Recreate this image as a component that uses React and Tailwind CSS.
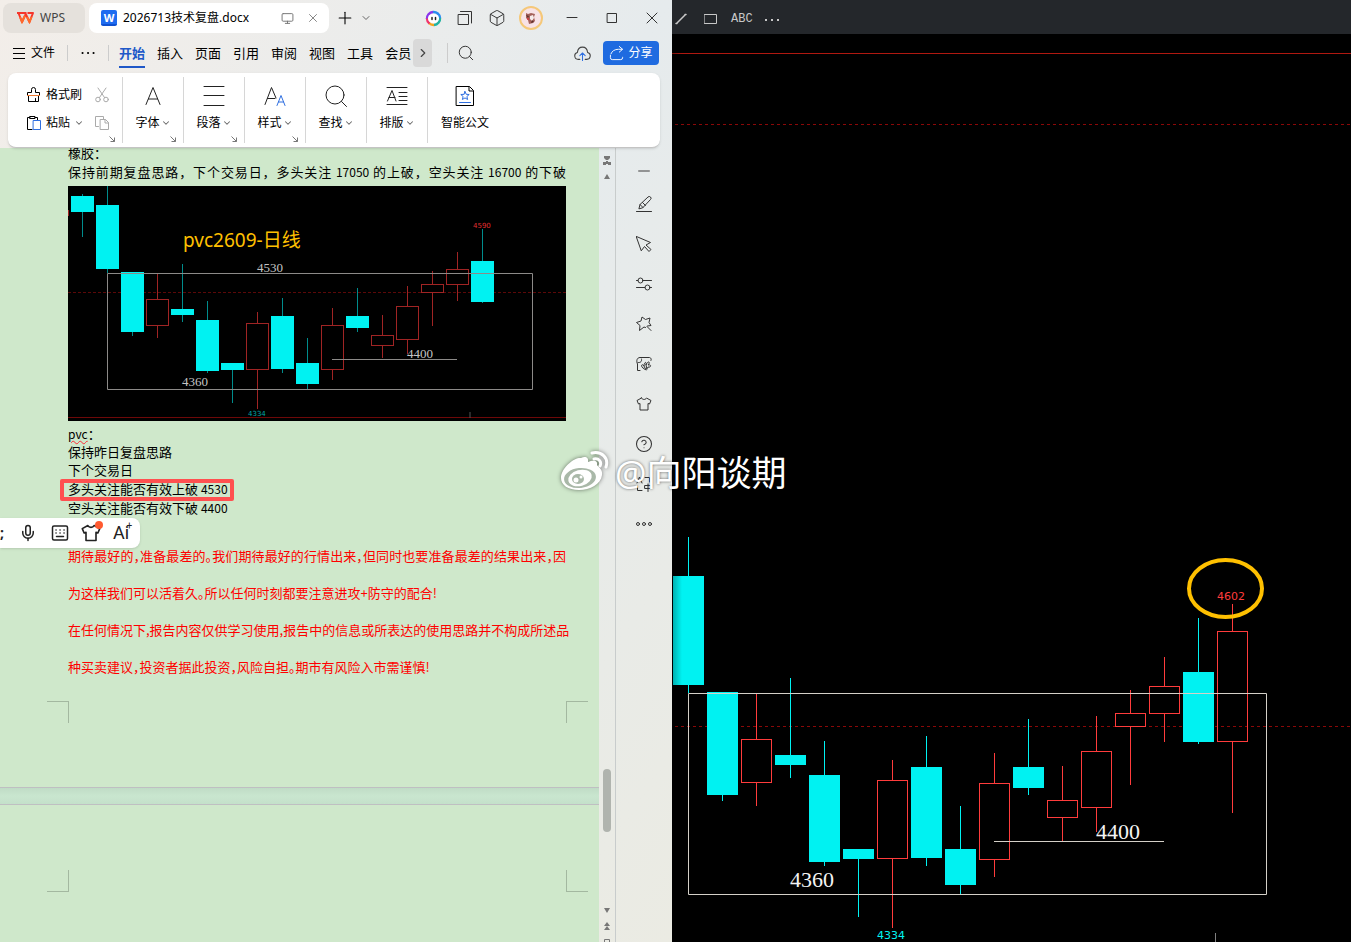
import React from 'react';
import {
  Box, ChevronDown, ChevronRight, CircleHelp, Mic, Minus, Monitor, Plus, Search, X,
} from 'lucide-react';

// [body left, body top, body bottom, wick high, wick low, rising]
const bigCandles = [
  [673, 576, 685, 537, 693, false],
  [707, 692, 795, 692, 801, false],
  [741, 739, 783, 694, 806, true],
  [775, 755, 765, 678, 778, false],
  [809, 775, 862, 741, 866, false],
  [843, 849, 859, 849, 917, false],
  [877, 780, 859, 760, 928, true],
  [911, 767, 858, 736, 866, false],
  [945, 849, 885, 806, 894, false],
  [979, 783, 860, 753, 877, true],
  [1013, 767, 788, 719, 795, false],
  [1047, 800, 818, 766, 841, true],
  [1081, 751, 808, 716, 832, true],
  [1115, 713, 727, 690, 785, true],
  [1149, 686, 714, 657, 742, true],
  [1183, 672, 742, 618, 744, false],
  [1217, 631, 742, 604, 813, true],
];

const smallCandles = [
  [71, 196, 212, 194, 237, false],
  [96, 205, 269, 186, 273, false],
  [121, 272, 332, 272, 336, false],
  [146, 299, 326, 273, 338, true],
  [171, 309, 315, 264, 322, false],
  [196, 320, 371, 301, 373, false],
  [221, 363, 370, 363, 403, false],
  [246, 323, 370, 312, 409, true],
  [271, 316, 369, 298, 373, false],
  [296, 363, 384, 338, 390, false],
  [321, 325, 370, 308, 380, true],
  [346, 316, 328, 288, 332, false],
  [371, 335, 346, 315, 358, true],
  [396, 306, 340, 286, 354, true],
  [421, 284, 293, 271, 326, true],
  [446, 269, 285, 252, 301, true],
  [471, 261, 302, 229, 303, false],
];

function Candles({ data, width, up, down, wickDown }) {
  const mid = (width - 1) / 2;
  return (
    <g shapeRendering="crispEdges">
      {data.map(([x, top, bottom, high, low, rising]) => (
        <g key={x}>
          <rect x={x + mid} y={high} width="1" height={top - high} fill={rising ? up : wickDown} />
          <rect x={x + mid} y={bottom} width="1" height={low - bottom} fill={rising ? up : wickDown} />
          {rising
            ? <rect x={x + 0.5} y={top + 0.5} width={width - 1} height={bottom - top - 1} fill="none" stroke={up} />
            : <rect x={x} y={top} width={width} height={bottom - top} fill={down} />}
        </g>
      ))}
    </g>
  );
}

function DailyChart() {
  return (
    <svg className="block w-full" viewBox="68 186 498 235" role="img" aria-label="pvc2609 日线">
      <rect x="68" y="186" width="498" height="235" fill="#000" />
      <path d="M68 292.5H566" stroke="#5c0808" strokeDasharray="3 2" />
      <path d="M68 417.5H566" stroke="#6e0808" />
      <path d="M470 412v6" stroke="#555" />
      <path d="M68.5 210v6" stroke="#a02020" />
      <Candles data={smallCandles} width={23} up="#a02424" down="#00f2f2" wickDown="#008c8c" />
      <path d="M107.500 273.500H532.500V389.500H107.500Z" fill="none" stroke="#8c8a88" />
      <path d="M332 359.500H457" stroke="#8c8a88" />
      <g className="font-['Liberation_Serif',serif] text-[13px]" fill="#c4c4c4">
        <text x="257" y="272">4530</text>
        <text x="182" y="386">4360</text>
        <text x="407" y="358">4400</text>
      </g>
      <g className="font-['DejaVu_Sans',sans-serif] text-[7px]">
        <text x="473" y="228" fill="#e03030">4590</text>
        <text x="248" y="416" fill="#00a8a8">4334</text>
      </g>
      <text x="183" y="247" fill="#ffc000" className="font-['Noto_Sans','Noto_Sans_CJK_SC',sans-serif] text-[19px]">pvc2609-日线</text>
    </svg>
  );
}

function TradingChart() {
  return (
    <svg className="min-h-0 w-full flex-1" viewBox="672 34 679 908" preserveAspectRatio="xMinYMin meet" role="img" aria-label="行情走势">
      <defs>
        <linearGradient id="edge">
          <stop offset="0" stopColor="#000" stopOpacity="0.3" />
          <stop offset="1" stopColor="#000" stopOpacity="0" />
        </linearGradient>
      </defs>
      <path d="M672 53.500H1351" stroke="#b01810" />
      <path d="M675 124.500H1351M675 726.500H1351" stroke="#8b0808" strokeDasharray="3 3" />
      <Candles data={bigCandles} width={31} up="#ff3c3c" down="#00f2f2" wickDown="#00f2f2" />
      <rect x="672" y="34" width="10" height="908" fill="url(#edge)" />
      <path d="M688.500 693.500H1266.500V894.500H688.500ZM994 841.500H1164" fill="none" stroke="#d4d0c8" />
      <path d="M1215.500 933v9" stroke="#808080" />
      <g className="font-['Liberation_Serif',serif] text-[22px]" fill="#f4f4f4">
        <text x="790" y="887">4360</text>
        <text x="1096" y="839">4400</text>
      </g>
      <g className="font-['DejaVu_Sans',sans-serif] text-[11px]">
        <text x="1217" y="600" fill="#ff3c3c">4602</text>
        <text x="877" y="939" fill="#00f2f2">4334</text>
      </g>
      <ellipse cx="1225.500" cy="588.500" rx="36.500" ry="28.500" fill="none" stroke="#ffc000" strokeWidth="4" />
    </svg>
  );
}

/* ---------- icons ---------- */

function Icon({ size = 16, box = 16, children, className = '' }) {
  return (
    <svg width={size} height={size} viewBox={`0 0 ${box} ${box}`} fill="none" stroke="currentColor" strokeLinecap="round" strokeLinejoin="round" className={className} aria-hidden="true">
      {children}
    </svg>
  );
}

const WpsLogo = () => (
  <svg width="17" height="12" viewBox="0 0 17 12" fill="none" stroke="#f5352b" strokeWidth="2" aria-hidden="true">
    <path d="M0 1h9.500M10.500 1H16l-3.500 9L8.500 1.500M1.500 1l3.500 9 4-8.500" strokeLinejoin="round" />
    <path d="M3 5l2 5 3-6.500M10 5l2.500 5 2-5" stroke="#ff6a2a" />
  </svg>
);

const WordLogo = () => (
  <span className="flex size-4 items-center justify-center rounded-xs border-b-2 border-[#0f50d0] bg-[#1f6cf0] text-[11px] font-bold leading-none text-white">W</span>
);

const AiRing = () => (
  <svg width="17" height="17" viewBox="0 0 17 17" fill="none" strokeWidth="2.500" aria-hidden="true">
    <path d="M2 9a6.500 6.500 0 0 1 6-7" stroke="#8a35ec" />
    <path d="M8 2a6.500 6.500 0 0 1 7 6" stroke="#2c8cf0" />
    <path d="M15 8a6.500 6.500 0 0 1-6 7" stroke="#22b3a0" />
    <path d="M9 15a6.500 6.500 0 0 1-5-2" stroke="#f6a21c" />
    <path d="M4.500 13.500A6.500 6.500 0 0 1 2 8.500" stroke="#f0366c" />
    <ellipse cx="8.500" cy="8.500" rx="5.500" ry="4.500" fill="#fff" />
    <path d="M7 7.500v2M10.500 7.500v2" stroke="#222" strokeWidth="1.500" strokeLinecap="round" />
  </svg>
);

const Avatar = () => (
  <svg width="24" height="24" viewBox="0 0 24 24" aria-hidden="true">
    <circle cx="12" cy="12" r="11" fill="#f8e2e6" stroke="#f5c879" strokeWidth="2" />
    <path d="M7 7l2 1 3-1 4 1-1 3 1 4-2 2-4 1-1-4-2-2z" fill="#a4605a" />
    <path d="M11 10l3-1 1 3-2 3-2-2z" fill="#f6ecec" />
    <path d="M7 9l3 1-1 2zM13 14l2 2-3 1z" fill="#5c2c2a" />
    <circle cx="9" cy="13" r="1" fill="#d8343c" />
  </svg>
);

const Stack = () => (
  <Icon><path d="M1.500 4.500h10v10h-10zM3.500 1.500h11V13" /></Icon>
);

const CloudIcon = () => (
  <Icon size={17}>
    <path d="M5.500 13.500H4a3.300 3.300 0 0 1-.8-6.500C3.500 4 5.500 2 8 2s4.500 2 4.800 5a3.300 3.300 0 0 1-.8 6.500h-1.500" />
    <path d="M8 14.500V8M5.500 10L8 7.500l2.500 2.500" stroke="#2f6fe0" />
  </Icon>
);

const Brush = () => (
  <Icon>
    <path d="M1.500 8V5.500h4v-3a1.500 1.500 0 0 1 4 0v3h4V8M2.500 8.500v6h10v-6M9.500 14.500v-3" />
    <path d="M1.500 8.500h12" stroke="#f07a30" />
  </Icon>
);

const Cut = () => (
  <Icon>
    <path d="M4 1l6.500 9.500M12 1L5.500 10.500" />
    <circle cx="4" cy="12.500" r="2.300" />
    <circle cx="12" cy="12.500" r="2.300" />
  </Icon>
);

const Paste = () => (
  <Icon>
    <path d="M6 14.500H1.500v-12H4M9 2.500h2.500V5M4 1.500h5v2H4z" />
    <path d="M7.500 5.500h7v9h-7z" stroke="#2f6fe0" />
  </Icon>
);

const CopyDocs = () => (
  <Icon><path d="M4.500 11.500h-3v-10h8v3M6.500 4.500h5l3 3v7h-8zM11 4.500V8h3.500" /></Icon>
);

const Launcher = () => (
  <svg width="6" height="6" viewBox="0 0 6 6" fill="none" stroke="#777" className="absolute bottom-px right-[7px]" aria-hidden="true">
    <path d="M.5.5l5 5M5.500 1.500v4H1.500" />
  </svg>
);

const FontIcon = () => (
  <Icon size={24} box={24}><path d="M5 20.500l7-17 7 17M7.500 15h9" /></Icon>
);

const ParagraphIcon = () => (
  <Icon size={24} box={24}><path d="M2 2.500h20M2 11.500h20M2 21.500h20" /></Icon>
);

const StyleIcon = () => (
  <Icon size={24} box={24}>
    <path d="M2 20.500l6.500-17L13 14M4.500 14.500H12" />
    <path d="M14 21.500l4-10 4 10M15.500 18h5" stroke="#2f6fe0" />
  </Icon>
);

const FindIcon = () => (
  <Icon size={24} box={24}><circle cx="11" cy="11" r="9" /><path d="M17.500 17.500l5 5" /></Icon>
);

const TypesetIcon = () => (
  <Icon size={24} box={24}><path d="M2 3.500h20M14 8.500h8M14 12.500h8M14 16.500h8M2 20.500h20M2.500 17L7 6.500 11 17M4 13.500h6" /></Icon>
);

const SmartDocIcon = () => (
  <Icon size={24} box={24}>
    <path d="M3.500 2.500h13l4 4v15h-17zM16 3v4h4" />
    <path d="M12 7.500l1.200 2.800 3 .2-2.300 2 .7 3-2.600-1.600-2.600 1.600.7-3-2.300-2 3-.2zM6.500 18.500h11" stroke="#2f6fe0" />
  </Icon>
);

const TeeIcon = ({ size = 16, weight = 1 }) => (
  <Icon size={size}>
    <path strokeWidth={weight} d="M5.500 2L1 4.500 2.500 8 4 7.500V14h8V7.500l1.500.5L15 4.500 10.500 2C9.500 4 6.500 4 5.500 2z" />
  </Icon>
);

const sideTools = [
  ['画笔', <Icon><path d="M.5 15.500h15M3 12.500l1-4L12 1a1.500 1.500 0 0 1 2.500 2.500L7 11.500zM4 8.500l3 3M6.500 6.500l3 3" /></Icon>],
  ['选择', <Icon><path d="M.5.5l14 6-4.500 2.500 5 4.500-2 2-4.500-5-3 4z" /></Icon>],
  ['属性', <Icon><path d="M.5 4.500H2M7 4.500h8.500M.5 11.500H9M14 11.500h1.500" /><circle cx="4.500" cy="4.500" r="2.500" /><circle cx="11.500" cy="11.500" r="2.500" /></Icon>],
  ['特色', <Icon><path d="M9.500 11.500L8 11l-4.500 3.500.5-5L.5 6.500 5 5l1-4 3.500 2.500L14 2l-1 4.500 2 3-3.500.5M11 10.500l4 4" /></Icon>],
  ['图文', <Icon><path d="M4 14.500H1.500V8C0 5 1 1.500 4 1.500h9.500a2 2 0 0 1 1.500 3M2 6.500C5 7 6 5 5.500 3M7 12c-3-2-1-5 1-2 0-4 3-5 2-1 2-5 5-3 2 0 4-1 3 3 0 2-1 3-4 3-5 1zM8 10l2 4M10 9l1 4" /></Icon>],
  ['皮肤', <TeeIcon />],
  ['帮助', <CircleHelp size={18} strokeWidth={1.4} />],
  ['翻译', <Icon><path d="M1 7l2.500-6L6 7M2 5h3M9 1.500h4.500V6M1.500 10v4.500H6M9 9.500h6v3H9zM12 8v7.500" /></Icon>],
  ['更多', <Icon><circle cx="2" cy="8" r="1.500" /><circle cx="8" cy="8" r="1.500" /><circle cx="14" cy="8" r="1.500" /></Icon>],
];

/* ---------- window chrome ---------- */

function TitleBar() {
  return (
    <header className="flex h-9 shrink-0 items-center pl-[3px] text-xs">
      <button className="flex h-[30px] w-[82px] shrink-0 items-center gap-[6px] rounded-lg bg-[#e5e1dc] pl-[14px] text-[#444]">
        <WpsLogo />WPS
      </button>
      <div className="ml-1 flex h-[30px] w-60 shrink-0 items-center rounded-lg bg-white pl-3 pr-[9px]">
        <WordLogo />
        <span className="ml-[6px] whitespace-nowrap text-black">2026713技术复盘.docx</span>
        <Monitor size={13} strokeWidth={1.8} className="ml-auto text-[#777]" />
        <button aria-label="关闭标签" className="ml-[12px]"><X size={14} strokeWidth={1.5} className="text-[#777]" /></button>
      </div>
      <button aria-label="新建" className="ml-[6px] shrink-0"><Plus size={20} strokeWidth={1.3} /></button>
      <button aria-label="标签列表" className="ml-[5px] shrink-0"><ChevronDown size={12} strokeWidth={2} className="text-[#666]" /></button>
      <div className="ml-auto flex shrink-0 items-center text-[#333]">
        <button aria-label="AI" className="flex w-8 justify-center"><AiRing /></button>
        <button aria-label="窗口" className="flex w-8 justify-center"><Stack /></button>
        <button aria-label="应用" className="flex w-8 justify-center"><Box size={18} strokeWidth={1.3} /></button>
        <button aria-label="账号" className="ml-[2px] mr-[5px] flex w-8 justify-center"><Avatar /></button>
        <button aria-label="最小化" className="flex w-10 justify-center"><Icon size={12} box={12}><path d="M1 5.500h10" /></Icon></button>
        <button aria-label="最大化" className="flex w-10 justify-center"><Icon size={12} box={12}><path d="M1.500 1.500h9v9h-9z" /></Icon></button>
        <button aria-label="关闭" className="flex w-10 justify-center"><Icon size={12} box={12}><path d="M1 1l10 10M11 1L1 11" /></Icon></button>
      </div>
    </header>
  );
}

const menus = ['插入', '页面', '引用', '审阅', '视图', '工具', '会员'];

function MenuBar() {
  return (
    <nav className="flex h-[34px] shrink-0 items-center pl-[13px] text-[13px] text-black">
      <button className="flex shrink-0 items-center gap-[6px] text-xs">
        <Icon size={12} box={12}><path d="M0 1.500h12M0 6.500h12M0 11.500h12" /></Icon>文件
      </button>
      <span className="ml-3 h-4 w-px bg-[#ccc]" />
      <button aria-label="更多菜单" className="ml-[13px]">
        <Icon size={14} box={14}><path d="M1.500 7h.1M7 7h.1M12.500 7h.1" strokeWidth="2" /></Icon>
      </button>
      <span className="ml-[13px] h-4 w-px bg-[#ccc]" />
      <div className="ml-[10px] flex h-full shrink-0 items-center gap-3 pt-px">
        <button className="flex h-7 items-center border-b-2 border-[#2058c8] pt-[2px] font-bold text-[#2058c8]">开始</button>
        {menus.map(m => <button key={m}>{m}</button>)}
      </div>
      <button aria-label="向右滚动" className="ml-[2px] flex h-7 w-[19px] shrink-0 items-center justify-center rounded-sm bg-[#d9d9d9]">
        <ChevronRight size={14} strokeWidth={2} className="text-[#444]" />
      </button>
      <span className="ml-[15px] h-5 w-px bg-[#ccc]" />
      <button aria-label="搜索" className="ml-[9px]"><Search size={18} strokeWidth={1.3} className="text-[#333]" /></button>
      <button aria-label="云同步" className="ml-auto text-[#444]"><CloudIcon /></button>
      <button className="ml-3 mr-[13px] flex h-6 w-14 shrink-0 items-center justify-center gap-1 rounded-sm bg-[#1f6be0] text-xs text-white">
        <Icon size={15}><path d="M1.500 10v2.500a2 2 0 0 0 2 2h9a2 2 0 0 0 2-2V12M2 8.500c1-3 4-5 8-5h4M11 .5l3.500 3-3.500 3" /></Icon>分享
      </button>
    </nav>
  );
}

const ribbonGroups = [
  { label: '字体', icon: <FontIcon />, launcher: true },
  { label: '段落', icon: <ParagraphIcon />, launcher: true },
  { label: '样式', icon: <StyleIcon />, launcher: true },
  { label: '查找', icon: <FindIcon />, launcher: false },
  { label: '排版', icon: <TypesetIcon />, launcher: false },
];

const Caret = () => <ChevronDown size={10} strokeWidth={2.5} className="text-[#666]" />;

function Ribbon() {
  return (
    <div className="relative z-10 ml-2 mr-3 mt-[3px] flex h-[75px] shrink-0 items-center rounded-lg border-b border-[#c4c4c4] bg-white text-xs text-black shadow">
      <div className="relative flex h-[66px] w-[115px] shrink-0 flex-col gap-[10px] border-r border-[#d6d6d6] pl-[18px] pr-3 pt-[9px]">
        <div className="flex h-[18px] items-center">
          <button className="flex items-center gap-1"><Brush />格式刷</button>
          <button aria-label="剪切" className="ml-auto text-[#aaa]"><Cut /></button>
        </div>
        <div className="flex h-[18px] items-center">
          <button className="flex items-center gap-1"><Paste />粘贴<Caret /></button>
          <button aria-label="复制" className="ml-auto text-[#aaa]"><CopyDocs /></button>
        </div>
        <Launcher />
      </div>
      {ribbonGroups.map(g => (
        <div key={g.label} className="relative h-[66px] w-[61px] shrink-0 border-r border-[#d6d6d6]">
          <button className="flex w-full flex-col items-center gap-[7px] pt-[7px] text-[#222]">
            {g.icon}
            <span className="flex items-center gap-px text-black">{g.label}<Caret /></span>
          </button>
          {g.launcher && <Launcher />}
        </div>
      ))}
      <button className="ml-[13px] flex h-[66px] shrink-0 flex-col items-center gap-[7px] pt-[7px]">
        <SmartDocIcon />智能公文
      </button>
    </div>
  );
}

/* ---------- document ---------- */

function DocumentPages() {
  return (
    <div className="-mt-[5px] min-w-0 flex-1 bg-[#cfe8cb] font-['Noto_Sans_CJK_SC',sans-serif] text-[13px] text-black">
      <div className="ml-[68px] mr-[33px] whitespace-nowrap">
        <p className="leading-[19px]">橡胶：</p>
        <p className="mb-[5px] leading-[19px] [text-align-last:justify]">
          保持前期复盘思路，下个交易日，多头关注 <span className="text-xs">17050</span> 的上破，空头关注 <span className="text-xs">16700</span> 的下破
        </p>
        <DailyChart />
        <p className="mt-1 leading-[18px]">
          <span className="text-xs underline decoration-red-500 decoration-wavy decoration-1">pvc</span>：
        </p>
        <p className="leading-[18px]">保持昨日复盘思路</p>
        <p className="leading-[18px]">下个交易日</p>
        <p className="relative leading-[19px]">
          多头关注能否有效上破 <span className="text-xs">4530</span>
          <span className="absolute -left-2 top-0 h-[22px] w-[174px] rounded-xs border-4 border-[#ff5050]" />
        </p>
        <p className="leading-[19px]">空头关注能否有效下破 <span className="text-xs">4400</span></p>
        <div className="mt-5 leading-[37px] text-[#ff0000] [font-feature-settings:'halt']">
          <p className="[text-align-last:justify]">期待最好的，准备最差的。我们期待最好的行情出来，但同时也要准备最差的结果出来，因</p>
          <p>为这样我们可以活着久。所以任何时刻都要注意进攻+防守的配合!</p>
          <p>在任何情况下,报告内容仅供学习使用,报告中的信息或所表达的使用思路并不构成所述品</p>
          <p>种买卖建议，投资者据此投资，风险自担。期市有风险入市需谨慎!</p>
        </div>
      </div>
      <div className="ml-[47px] mr-[11px] mt-4 flex justify-between">
        <span className="size-[22px] border-r border-t border-[#a3b8a0]" />
        <span className="size-[22px] border-l border-t border-[#a3b8a0]" />
      </div>
      <div className="mt-16 h-[18px] border-y border-[#bfbfc2] bg-linear-to-b from-[#c0dcc6] via-[#c9e6cf] to-[#c4e0ca]" />
      <div className="ml-[47px] mr-[11px] flex justify-between pt-[65px]">
        <span className="size-[22px] border-b border-r border-[#a3b8a0]" />
        <span className="size-[22px] border-b border-l border-[#a3b8a0]" />
      </div>
    </div>
  );
}

function ScrollStrip() {
  return (
    <div className="flex w-[17px] shrink-0 flex-col items-center border-r border-[#c8cccc] pt-2">
      <svg width="8" height="26" viewBox="0 0 8 26" fill="#777" className="shrink-0" aria-hidden="true">
        <path d="M1 0h6v2L5 4H3L1 2zM3 5h2v1h3v3H5V8H3v1H0V6h3zM4 18l3 5H1z" />
      </svg>
      <div className="mt-[587px] h-[63px] w-2 shrink-0 rounded-full bg-[#b0b4ae]" />
      <svg width="8" height="38" viewBox="0 0 8 38" fill="#777" className="mt-[74px] shrink-0" aria-hidden="true">
        <path d="M1 2h6l-3 5zM4 16l3 4H1zM4 20l3 4H1z" />
        <path d="M1.500 33.500h5v4h-5z" fill="none" stroke="#777" />
      </svg>
    </div>
  );
}

function SideTools() {
  return (
    <aside className="flex w-14 shrink-0 flex-col items-center text-[#333]">
      <button aria-label="收起" className="flex h-9 items-end pb-1"><Minus size={18} strokeWidth={2} className="text-[#777]" /></button>
      {sideTools.map(([name, icon]) => (
        <button key={name} aria-label={name} className="flex h-10 w-full shrink-0 items-center justify-center">{icon}</button>
      ))}
    </aside>
  );
}

function ImeBar() {
  return (
    <div className="absolute left-0 top-[518px] z-20 flex h-[30px] w-[140px] items-center rounded-r-lg bg-white text-[#222] shadow">
      <span className="w-[19px] text-sm font-bold">;</span>
      <button aria-label="语音"><Mic size={18} strokeWidth={2} /></button>
      <button aria-label="键盘" className="ml-[14px]">
        <Icon size={18} box={18}>
          <rect x="1.500" y="2" width="15" height="14" rx="1.500" strokeWidth="1.500" />
          <path d="M5 6h.1M9 6h.1M13 6h.1M5 9h.1M9 9h.1M13 9h.1M5.500 12.500h7" strokeWidth="1.500" />
        </Icon>
      </button>
      <button aria-label="换肤" className="relative ml-3">
        <TeeIcon size={20} weight={1.3} />
        <span className="absolute -right-[2px] -top-[2px] size-2 rounded-full bg-[#ff5a30]" />
      </button>
      <button className="relative ml-3 font-['Roboto',sans-serif] text-lg leading-none">
        Ai
        <span className="absolute -right-[3px] -top-[3px] text-[10px] leading-none">+</span>
      </button>
    </div>
  );
}

function Watermark() {
  return (
    <div className="absolute left-[560px] top-[448px] z-30 flex items-center gap-[6px] text-white">
      <svg width="49" height="50" viewBox="0 0 49 50" className="drop-shadow-[0_0_2px_rgba(0,0,0,0.5)]" aria-hidden="true">
        <path d="M21 10c4-2 8-1 7 4 5-2 10-2 9 3 1 2 6 4 5 10-1 9-12 15-23 15C8 42 1 37 1 30 1 21 12 11 19 10z" fill="#fff" />
        <ellipse cx="20" cy="30" rx="16" ry="10" fill="#a9b8a8" transform="rotate(-6 20 30)" />
        <ellipse cx="20" cy="30" rx="12" ry="8" fill="#fff" transform="rotate(-15 20 30)" />
        <ellipse cx="18" cy="31" rx="6" ry="5" fill="#a9b8a8" />
        <circle cx="16" cy="32" r="2.500" fill="#fff" />
        <circle cx="21" cy="29" r="1.500" fill="#fff" />
        <path d="M34 11c5-1 8 3 6 7M32 5c10-2 17 5 14 14" fill="none" stroke="#fff" strokeWidth="3" strokeLinecap="round" />
      </svg>
      <span className="whitespace-nowrap text-[35px] leading-[50px] [text-shadow:0_0_3px_rgba(0,0,0,0.6)]">@向阳谈期</span>
    </div>
  );
}

function ChartToolbar() {
  return (
    <div className="flex h-[34px] shrink-0 items-center bg-[#24272b] pl-[3px] pt-1 text-[#c8c8c8]">
      <button aria-label="画线"><Icon size={12} box={12}><path d="M1.500 10.500l9-9M1 10.500h1M10 1.500h1" strokeWidth="1.500" /></Icon></button>
      <button aria-label="矩形" className="ml-[17px]"><Icon size={13} box={13}><path d="M.5 1.500h12v9H.5z" /></Icon></button>
      <button className="ml-[14px] font-['Liberation_Mono',monospace] text-xs">ABC</button>
      <button aria-label="更多" className="ml-[11px]"><Icon size={16}><path d="M1 9h2M7 9h2M13 9h2" strokeWidth="2" strokeLinecap="butt" /></Icon></button>
    </div>
  );
}

export default function App() {
  return (
    <div className="relative grid h-screen grid-cols-[672fr_679fr] overflow-hidden bg-black font-['Noto_Sans','Noto_Sans_CJK_SC',sans-serif]">
      <section className="flex h-screen min-w-0 flex-col overflow-hidden bg-linear-to-br from-[#f3eee9] via-[#e6ebed] to-[#ebebe3]">
        <TitleBar />
        <MenuBar />
        <Ribbon />
        <main className="flex min-h-0 flex-1 overflow-hidden">
          <DocumentPages />
          <ScrollStrip />
          <SideTools />
        </main>
      </section>
      <section className="flex h-screen min-w-0 flex-col">
        <ChartToolbar />
        <TradingChart />
      </section>
      <ImeBar />
      <Watermark />
    </div>
  );
}
